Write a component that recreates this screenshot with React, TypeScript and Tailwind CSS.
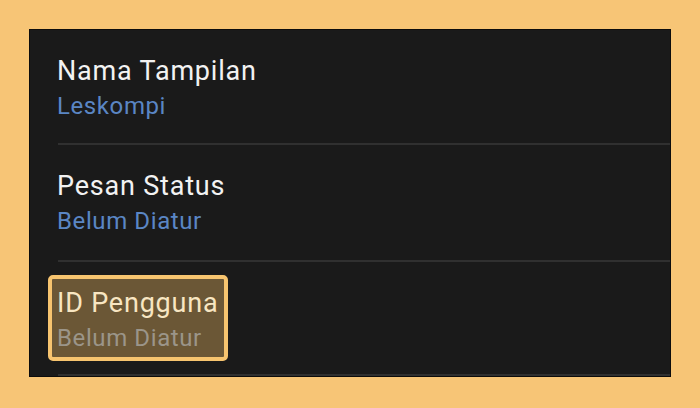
import React from "react";

function Divider() {
  return <div className="ml-[28px] h-[2px] shrink-0 bg-[#303030]" />;
}

export default function App() {
  return (
    <div
      className="w-[700px] h-[408px] bg-[#f7c576] pt-[29px] pl-[29px]"
      style={{ fontFamily: "Roboto, 'Noto Sans', sans-serif" }}
    >
      <div className="w-[642px] h-[348px] bg-[#1a1a1a] border border-[#0c0c0c] flex flex-col overflow-hidden">
        <div className="h-[113px] shrink-0 pl-[27px] pt-[25px] flex flex-col">
          <div className="text-[27px] leading-[32px] tracking-[0.8px] text-[#f2f2f2]">Nama Tampilan</div>
          <div className="mt-[5px] text-[24px] leading-[28px] tracking-[0.6px] text-[#5a86c4]">Leskompi</div>
        </div>
        <Divider />
        <div className="h-[115px] shrink-0 pl-[27px] pt-[25px] flex flex-col">
          <div className="text-[27px] leading-[32px] tracking-[0.8px] text-[#f2f2f2]">Pesan Status</div>
          <div className="mt-[5px] text-[24px] leading-[28px] tracking-[0.6px] text-[#5a86c4]">Belum Diatur</div>
        </div>
        <Divider />
        <div className="h-[112px] shrink-0 pl-[18px] pt-[13px] flex flex-col">
          <div className="w-[180px] h-[86px] rounded-[5px] border-[4px] border-[#f7c46f] bg-[#6b5736] pl-[5px] pt-[8px] flex flex-col">
            <div className="text-[27px] leading-[32px] tracking-[0.8px] text-[#f8e6c2] whitespace-nowrap">ID Pengguna</div>
            <div className="mt-[5px] text-[24px] leading-[28px] tracking-[0.6px] text-[#9b9589] whitespace-nowrap">Belum Diatur</div>
          </div>
        </div>
        <Divider />
      </div>
    </div>
  );
}
